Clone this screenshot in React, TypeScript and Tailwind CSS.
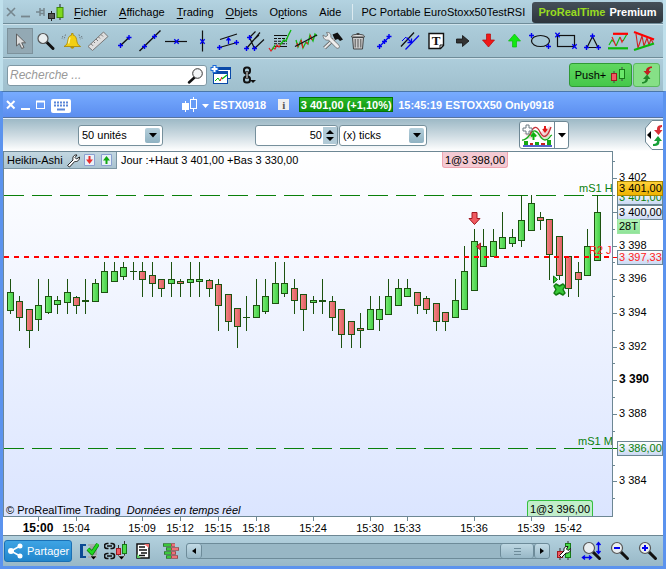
import React from "react";

type Candle = [x: number, high: number, top: number, bottom: number, low: number, dir: "u" | "d" | "n"];

const CANDLES: Candle[] = [
  [10, 279, 292, 311, 314, "u"], [19, 296, 301, 318, 331, "d"], [29, 309, 309, 331, 348, "d"],
  [38, 279, 305, 320, 331, "u"], [48, 279, 296, 313, 314, "u"], [57, 296, 300, 305, 314, "u"],
  [67, 279, 292, 303, 314, "u"], [76, 296, 297, 306, 314, "d"], [85, 279, 300, 302, 314, "n"],
  [95, 279, 283, 302, 302, "u"], [104, 262, 271, 293, 293, "u"], [114, 262, 271, 282, 282, "u"],
  [123, 262, 267, 277, 280, "u"], [133, 262, 271, 272, 280, "n"], [142, 262, 271, 280, 297, "d"],
  [152, 262, 275, 284, 297, "d"], [161, 279, 279, 289, 297, "d"], [171, 262, 279, 284, 297, "u"],
  [180, 279, 281, 284, 297, "d"], [190, 262, 279, 283, 297, "u"], [199, 262, 279, 282, 297, "u"],
  [209, 279, 280, 289, 297, "d"], [218, 279, 284, 306, 331, "d"], [228, 294, 294, 322, 331, "d"],
  [237, 308, 308, 327, 348, "d"], [246, 296, 317, 318, 331, "n"], [256, 279, 305, 318, 318, "u"],
  [265, 279, 296, 312, 314, "u"], [275, 262, 283, 304, 304, "u"], [284, 262, 283, 294, 297, "u"],
  [294, 279, 288, 301, 314, "d"], [303, 294, 294, 310, 331, "d"], [313, 296, 300, 303, 314, "u"],
  [322, 279, 300, 302, 314, "n"], [332, 296, 301, 318, 331, "d"], [341, 309, 309, 335, 348, "d"],
  [351, 321, 321, 335, 348, "d"], [360, 313, 328, 331, 348, "d"], [370, 296, 309, 330, 330, "u"],
  [379, 296, 309, 320, 331, "u"], [388, 279, 296, 315, 315, "u"], [398, 279, 288, 306, 306, "u"],
  [407, 279, 288, 297, 297, "u"], [417, 292, 292, 306, 314, "d"], [426, 296, 298, 310, 314, "d"],
  [436, 303, 303, 322, 331, "d"], [445, 312, 312, 322, 331, "d"], [455, 279, 300, 318, 318, "u"],
  [464, 246, 271, 310, 310, "u"], [474, 229, 241, 291, 291, "u"], [483, 229, 246, 267, 267, "u"],
  [493, 229, 241, 257, 257, "u"], [502, 212, 237, 249, 249, "u"], [512, 229, 237, 244, 247, "u"],
  [521, 195, 220, 241, 247, "u"], [531, 195, 203, 231, 231, "u"], [540, 212, 217, 221, 230, "d"],
  [549, 219, 219, 255, 280, "d"], [559, 236, 236, 276, 280, "d"], [568, 256, 256, 289, 297, "d"],
  [578, 262, 272, 280, 297, "d"], [587, 229, 246, 276, 276, "u"], [597, 195, 212, 261, 261, "u"],
];

const TIMES: { x: number; label: string; strong?: boolean }[] = [
  { x: 38, label: "15:00", strong: true }, { x: 76, label: "15:04" }, { x: 142, label: "15:09" },
  { x: 180, label: "15:12" }, { x: 218, label: "15:15" }, { x: 256, label: "15:18" },
  { x: 313, label: "15:24" }, { x: 370, label: "15:30" }, { x: 407, label: "15:33" },
  { x: 474, label: "15:36" }, { x: 531, label: "15:39" }, { x: 568, label: "15:42" },
];

const PRICES: { y: number; label: string; strong?: boolean }[] = [
  { y: 178, label: "3 402" }, { y: 246, label: "3 398" }, { y: 279, label: "3 396" },
  { y: 313, label: "3 394" }, { y: 347, label: "3 392" }, { y: 380, label: "3 390", strong: true },
  { y: 414, label: "3 388" }, { y: 481, label: "3 384" },
];

const MINOR_TICKS = [161, 195, 229, 262, 296, 330, 363, 397, 431, 465, 498];
const MAJOR_TICKS = [178, 212, 246, 279, 313, 347, 380, 414, 448, 481];

function Plus({ x, y }: { x: number; y: number }) {
  return <path d={`M${x - 2.5} ${y}h5M${x} ${y - 2.5}v5`} stroke="#0000f0" strokeWidth="1.4" fill="none" />;
}

function Cross({ x, y }: { x: number; y: number }) {
  return (
    <path d={`M${x - 2.2} ${y - 2.2}l4.4 4.4M${x + 2.2} ${y - 2.2}l-4.4 4.4`} stroke="#0000f0" strokeWidth="1.3" fill="none" />
  );
}

function Lens({ x, y, r, children }: { x: number; y: number; r: number; children?: React.ReactNode }) {
  return (
    <g>
      <path d={`M${x + r * 0.7} ${y + r * 0.7}L${x + r + 5} ${y + r + 5}`} stroke="#111" strokeWidth="3" strokeLinecap="round" />
      <circle cx={x} cy={y} r={r} fill="#e9eef0" stroke="#555" strokeWidth="1.2" />
      {children}
    </g>
  );
}

const ARROW_DOWN = "M11.5 6h4v6h4L13.5 19 7.5 12h4z";
const ARROW_UP = "M11.5 19h4v-6h4L13.5 6 7.5 13h4z";

const TOOLS: { name: string; art: React.ReactNode }[] = [
  { name: "Sélection", art: <path d="M9.5 6v12l2.8-2.5 2.4 5 2.3-1-2.3-4.7h3.8z" fill="#dcdcdc" stroke="#555" strokeWidth=".9" /> },
  { name: "Zoom", art: <Lens x={10} y={10.5} r={5} /> },
  {
    name: "Alerte",
    art: (
      <g>
        <path d="M5 18.5c3-1.5 3.5-3.5 4-7 .5-2.5 1.500-4 3.500-4.300V5.500h1.600v1.700c2 .3 3 1.800 3.500 4.300.5 3.500 1 5.500 4 7z" fill="#f2cf12" stroke="#a88500" strokeWidth=".8" />
        <path d="M11 9.500c-.8 2-.8 4-1.500 6" stroke="#fff4a0" strokeWidth="1.5" fill="none" />
        <path d="M11.3 19h4c-.5 2.200-3.500 2.200-4 0z" fill="#b89200" />
        <path d="M6.500 6.500l-1.500 5M3.800 8l-.8 3M20 6.500l1.500 5M22.500 8l.8 3" stroke="#6c7980" strokeDasharray="1.5 1" fill="none" />
      </g>
    ),
  },
  {
    name: "Règle",
    art: (
      <g>
        <path d="M3 18.500L18.500 4l4.500 4.500L7.500 22.500z" fill="#dedede" stroke="#777" />
        <path d="M6 15.800l2 2M8.500 13.500l1.500 1.500M11 11l2 2M13.500 9l1.500 1.500M16 6.500l2 2" stroke="#777" />
      </g>
    ),
  },
  { name: "Segment", art: <g><path d="M9.5 17.5l8.500-8" stroke="#111" strokeWidth="1.5" /><Plus x={9.5} y={17.5} /><Plus x={18} y={9.5} /></g> },
  { name: "Droite", art: <g><path d="M2.5 23L23.5 2.5" stroke="#111" strokeWidth="1.4" /><Plus x={7.5} y={18.5} /><Plus x={17.5} y={8.5} /></g> },
  { name: "Horizontale", art: <g><path d="M2 13.5h22" stroke="#111" strokeWidth="1.2" /><Cross x={13.5} y={13.5} /></g> },
  { name: "Verticale", art: <g><path d="M13.5 2.5v21" stroke="#111" strokeWidth="1.2" /><Cross x={13.5} y={13.5} /></g> },
  {
    name: "Canal",
    art: (
      <g>
        <path d="M5 11.500l17-5.500M4.500 19.500l17.500-5" stroke="#111" strokeWidth="1.2" />
        <path d="M13.500 16V10.500M11.500 12.500l2-2.500 2 2.500" stroke="#0000f0" strokeWidth="1.3" fill="none" />
        <Plus x={4.5} y={19.5} /><Plus x={21.5} y={14.5} />
      </g>
    ),
  },
  {
    name: "Fourche",
    art: (
      <g>
        <path d="M8.500 9.500l6-6M5.500 20.500L19 4.500M13.500 20.500l9.500-9M8.500 9.500l5 11M10.500 14L18 7" stroke="#111" strokeWidth="1.2" />
        <Plus x={8.5} y={9.5} /><Plus x={5.5} y={20.5} /><Plus x={13.5} y={20.5} />
      </g>
    ),
  },
  {
    name: "Fibonacci",
    art: (
      <g>
        <path d="M7 7.500h13M7 18.500h13" stroke="#111" strokeWidth="1.2" />
        <path d="M7 10.500h13M7 13.200h13M7 15.800h13" stroke="#111" strokeWidth="1.1" strokeDasharray="3 1" />
        <path d="M2 20l2 3 2-3 2 1 2-4 2 2 2-3" stroke="#e02020" strokeWidth="1.2" fill="none" />
        <path d="M5 22l3-5M13 17l4-5 2 1 2-5 3-6" stroke="#12b812" strokeWidth="1.4" fill="none" />
      </g>
    ),
  },
  {
    name: "Régression",
    art: (
      <g>
        <path d="M3 12l2 7 3-7 2 8 3-6 2 2 2-9 3 6 2-7 2 2" stroke="#12b812" strokeWidth="1.3" fill="none" />
        <path d="M4 15l1 4M8 12l2 8M13 14l2 2M17 7l2 5" stroke="#e02020" strokeWidth="1.3" fill="none" />
        <path d="M2 18.500L24 7" stroke="#111" strokeWidth="1.3" />
      </g>
    ),
  },
  {
    name: "Outils",
    art: (
      <g>
        <path d="M13.500 6.500l5-2 5.500 7-3 1.500-2-2-3 1z" fill="#111" />
        <path d="M15 11l-9.500 9" stroke="#555" strokeWidth="3.6" />
        <path d="M15 11l-9.500 9" stroke="#e8e8e8" strokeWidth="2" />
        <path d="M4 7l2.800 1.800L9 7 7.500 4.500c3-.5 5 1.500 4.300 4.800l8.200 8c1.500 2-1 4-2.800 2.500L9.500 12c-3 .8-5.500-1.500-5.500-5z" fill="#eee" stroke="#666" strokeWidth=".8" />
      </g>
    ),
  },
  {
    name: "Supprimer",
    art: (
      <g>
        <path d="M7.500 9.500h11l-1 11.500h-9z" fill="#ccc" stroke="#444" />
        <path d="M10.200 11v8.500M13 11v8.500M15.800 11v8.500" stroke="#555" />
        <path d="M6.500 9c0-2 2-2.500 6.500-2.500s6.500.5 6.500 2.500z" fill="#e2e2e2" stroke="#444" />
        <path d="M11 6.500c0-1.500 4-1.500 4 0" stroke="#444" fill="none" />
      </g>
    ),
  },
  { name: "Segment bleu", art: <g><path d="M8.500 18.500l10-10" stroke="#0000f0" strokeWidth="1.2" /><Plus x={8.5} y={18.5} /><Plus x={18} y={8.5} /><Plus x={13.5} y={13.5} /></g> },
  {
    name: "Parallèle",
    art: (
      <g>
        <path d="M4 18.500l13-14" stroke="#111" strokeWidth="1.3" />
        <path d="M8.500 21.500L22 7.500" stroke="#0000f0" strokeWidth="1.2" />
        <path d="M9.500 9.500l4.500 4.500M14.500 10.500v4h-4" stroke="#0000f0" strokeWidth="1.3" fill="none" />
        <path d="M5 13l4-4" stroke="#0000f0" />
      </g>
    ),
  },
  {
    name: "Texte",
    art: (
      <g>
        <path d="M6 5.500h14.500v12l-3 3H6z" fill="#fff" stroke="#111" strokeWidth="1.4" />
        <path d="M20.500 17h-3.500v3.500" fill="none" stroke="#111" />
        <text x="13" y="17" textAnchor="middle" fontFamily="Liberation Serif, serif" fontWeight="bold" fontSize="13" fill="#111">T</text>
      </g>
    ),
  },
  { name: "Flèche", art: <path d="M7.500 11h6V7.500L20 13l-6.500 5.500V15h-6z" fill="#333" stroke="#111" strokeWidth=".8" /> },
  { name: "Flèche baissière", art: <path d={ARROW_DOWN} fill="#f01818" stroke="#b80808" strokeWidth=".7" /> },
  { name: "Flèche haussière", art: <path d={ARROW_UP} fill="#12e812" stroke="#10b810" strokeWidth=".7" /> },
  { name: "Ellipse", art: <g><ellipse cx="13.5" cy="13" rx="9" ry="5.5" fill="none" stroke="#111" strokeWidth="1.2" /><Plus x={4.5} y={7.5} /><Plus x={21.5} y={18.5} /></g> },
  { name: "Rectangle", art: <g><rect x="4.5" y="7.5" width="17" height="11" fill="none" stroke="#111" strokeWidth="1.2" /><Cross x={4.5} y={7} /><Cross x={21.5} y={18.5} /></g> },
  { name: "Triangle", art: <g><path d="M13.500 8.500L8 19.500h11z" fill="none" stroke="#111" strokeWidth="1.2" /><Plus x={13.5} y={8} /><Plus x={7.5} y={19.5} /><Plus x={19.5} y={19.5} /></g> },
  {
    name: "Canal de prix",
    art: (
      <g>
        <path d="M4 17l3-5 2 2M11 18l4-9M18 13l4-7" stroke="#12b812" strokeWidth="1.2" fill="none" />
        <path d="M7 9l4 9M15 9l2 5 1-2" stroke="#e02020" strokeWidth="1.2" fill="none" />
        <path d="M8 5.800h15" stroke="#f00" strokeWidth="2.2" />
        <path d="M3 20.300h20" stroke="#0cb80c" strokeWidth="2.2" />
      </g>
    ),
  },
  {
    name: "Triangle de prix",
    art: (
      <g>
        <path d="M5 6l2 14 4-12 2 10 3-8 2 7 2-6 2 4" stroke="#d02020" strokeWidth="1.1" fill="none" />
        <path d="M3 4l20 7.500" stroke="#f00" strokeWidth="2.2" />
        <path d="M3 22l20-6.500" stroke="#0cb80c" strokeWidth="2.2" />
      </g>
    ),
  },
];

const MENUS: [string, string, string][] = [
  ["", "F", "ichier"], ["", "A", "ffichage"], ["", "T", "rading"], ["", "O", "bjets"], ["O", "p", "tions"], ["Aide", "", ""],
];

function AppMenu() {
  return (
    <header className="flex h-6 items-center border-b border-[#6f8c99] bg-linear-to-b from-[#b3d3e1] to-[#a4c3d1]">
      <svg width="62" height="22" className="shrink-0" aria-hidden="true">
        <path d="M4 7l8 8M12 7l-8 8" stroke="#76868e" strokeWidth="1.6" />
        <path d="M18 15.500h9" stroke="#76868e" strokeWidth="1.8" />
        <path d="M33 11h4M37 7v8M37 9.500h4.500M37 12.500h4.500M41 7v8" stroke="#76868e" strokeWidth="1.5" />
        <path d="M48.500 10v10M57 3v16" stroke="#222" />
        <rect x="45.5" y="12.5" width="6" height="5" fill="#555" stroke="#222" />
        <rect x="54" y="6.500" width="6" height="10" fill="#7fd81e" stroke="#3f8a08" />
      </svg>
      <nav className="ml-[9px] flex gap-3">
        {MENUS.map(([before, key, after]) => (
          <button key={before + key + after} type="button" className="whitespace-nowrap">
            {before}<span className="underline underline-offset-2">{key}</span>{after}
          </button>
        ))}
      </nav>
      <div className="ml-[11px] h-4 border-l border-[#dceaf0] pl-2 leading-4 whitespace-nowrap">PC Portable EuroStoxx50TestRSI</div>
      <div className="mt-px ml-auto flex h-[21px] w-[131px] shrink-0 items-center justify-center gap-1 rounded-[3px] bg-linear-to-b from-[#454f58] to-[#2c353d] font-bold">
        <span className="text-[#98dc20]">ProRealTime</span>
        <span className="text-white">Premium</span>
      </div>
    </header>
  );
}

function DrawingTools() {
  return (
    <div className="flex h-[34px] items-center border-t border-b border-t-[#cfe3ec] border-b-[#6f8c99] bg-linear-to-b from-[#adcddb] to-[#9fbfcd] pl-1">
      {TOOLS.map((tool, i) => (
        <button
          key={tool.name}
          type="button"
          aria-label={tool.name}
          className={i === 0 ? "size-[26px] shrink-0 border border-[#7d929c] bg-[#93a9b4]" : "size-[26px] shrink-0"}
        >
          <svg viewBox="0 0 26 26" className={i === 0 ? "-m-px size-[26px]" : "size-[26px]"} fill="none">{tool.art}</svg>
        </button>
      ))}
    </div>
  );
}

function SwapArrows() {
  return (
    <svg width="18" height="20" viewBox="0 0 18 20" aria-hidden="true">
      <path d="M14 1.500C9 1.500 8 4 8 6H5.500l4 4.500L13 6h-2c0-1.500.5-3 3-3z" fill="#c02020" />
      <path d="M4 18.500c5 0 6-2.500 6-4.500h2.500L9 9.500 5 14h2.500c0 1.500-.5 3-3.500 3z" fill="#20882a" />
    </svg>
  );
}

function SearchRow() {
  return (
    <div className="flex h-[33px] items-center border-t border-[#cfe3ec] bg-linear-to-b from-[#adcddb] to-[#9fbfcd] pl-1">
      <label className="flex h-[21px] w-[200px] items-center rounded-[3px] border border-[#7f98a4] bg-white">
        <input aria-label="Recherche" placeholder="Recherche ..." className="min-w-0 flex-1 pl-[2px] text-xs italic outline-none placeholder:text-[#999]" />
        <svg width="20" height="19" aria-hidden="true">
          <path d="M9 11l-6 5.500" stroke="#111" strokeWidth="2.5" strokeLinecap="round" />
          <circle cx="11.5" cy="7.5" r="4.8" fill="#f4f6f7" stroke="#333" />
        </svg>
      </label>
      <button type="button" aria-label="Nouveau graphique" className="ml-[3px]">
        <svg width="22" height="20">
          <rect x="6.500" y="2.500" width="14" height="11" fill="#fff" stroke="#0a49a8" /><path d="M6 3.500h15" stroke="#0a49a8" strokeWidth="3" />
          <rect x="3.500" y="6.500" width="14" height="12" fill="#fff" stroke="#0a49a8" /><path d="M3 7.500h15" stroke="#0a49a8" strokeWidth="3" />
          <path d="M5 16l3-3 2 3" stroke="#0b0" fill="none" /><path d="M10 16l2-4" stroke="#d00" /><path d="M12 14l5-4" stroke="#0b0" strokeWidth="1.3" />
          <path d="M.5 4h8M4.500 0v8" stroke="#1a6ad8" strokeWidth="4" /><path d="M1.500 4h6M4.500 1v6" stroke="#fff" strokeWidth="2" />
        </svg>
      </button>
      <button type="button" aria-label="Lier les fenêtres" className="ml-[9px]">
        <svg width="18" height="20" fill="none">
          <rect x="3" y="2.500" width="6" height="6" rx="2.500" stroke="#111" strokeWidth="2" />
          <rect x="3" y="11.500" width="6" height="6" rx="2.500" stroke="#111" strokeWidth="2" />
          <path d="M6 6v8" stroke="#111" strokeWidth="3" /><path d="M6 6.500v7" stroke="#fff" />
          <path d="M9 15h6l-3 3z" fill="#111" />
        </svg>
      </button>
      <button type="button" className="mr-px ml-auto flex h-6 w-[63px] items-center justify-center gap-1 rounded-[3px] border border-[#2f9a35] bg-linear-to-b from-[#5fd75f] to-[#45c84a]">
        Push+
        <svg width="16" height="18" aria-hidden="true">
          <path d="M4 5v12M12 1v14" stroke="#444" />
          <rect x="1.500" y="7.500" width="5" height="7" fill="#f05a62" stroke="#a01a22" />
          <rect x="9.500" y="3.500" width="5" height="9" fill="#6ae86a" stroke="#177a17" />
        </svg>
      </button>
      <button type="button" aria-label="Inverser" className="mr-[3px] flex h-6 w-[27px] items-center justify-center rounded-[3px] border border-[#5bb85f] bg-[#86e086]">
        <SwapArrows />
      </button>
    </div>
  );
}

function TitleBar() {
  return (
    <div className="flex h-[26px] items-center border-b border-[#5674a0] bg-linear-to-b from-[#78acff] to-[#5b8def] font-bold text-white">
      <svg width="70" height="24" fill="none" className="shrink-0" aria-hidden="true">
        <path d="M4 8l7.500 7.500M11.500 8L4 15.500" stroke="#fff" strokeWidth="2" />
        <path d="M18 16h9" stroke="#fff" strokeWidth="2" />
        <rect x="33.500" y="8.500" width="8" height="7" stroke="#fff" /><path d="M33 8.500h9" stroke="#fff" strokeWidth="2" />
        <rect x="48" y="6" width="20" height="14" rx="2" fill="#fff" />
        <path d="M51 9.500h14M51 12.500h14" stroke="#5b86d8" strokeWidth="2" strokeDasharray="2 1" /><path d="M54 16.500h8" stroke="#5b86d8" strokeWidth="2" />
      </svg>
      <svg width="30" height="22" fill="none" className="ml-[108px] shrink-0" aria-hidden="true">
        <path d="M4.500 7v11M12.500 3v15" stroke="#fff" />
        <rect x="1" y="9" width="7" height="7" fill="#fff" />
        <rect x="9.500" y="5.500" width="6" height="9" fill="#689cf6" stroke="#fff" />
        <path d="M21 10h7l-3.500 4z" fill="#fff" />
      </svg>
      <span className="ml-[2px]">ESTX0918</span>
      <span className="ml-3 flex size-[11px] items-center justify-center bg-[#eee] font-['Liberation_Serif',serif] text-[11px] text-[#555]">i</span>
      <span className="ml-[10px] flex h-[15px] w-[94px] items-center justify-center border border-[#067306] bg-linear-to-b from-[#28b828] to-[#0c930c] whitespace-nowrap">
        3 401,00 (+1,10%)
      </span>
      <span className="ml-[5px] whitespace-nowrap">15:45:19 ESTOXX50 Only0918</span>
    </div>
  );
}

function Dropdown({ label, value, className }: { label: string; value: string; className: string }) {
  return (
    <label className={`relative flex h-[21px] shrink-0 items-center rounded-[3px] border border-[#76909c] bg-white ${className}`}>
      <select aria-label={label} className="size-full appearance-none bg-transparent pl-[3px] outline-none">
        <option>{value}</option>
      </select>
      <span className="pointer-events-none absolute top-[2px] right-[2px] flex size-[15px] items-center justify-center rounded-[2px] bg-linear-to-b from-[#b5cfdb] to-[#8fb2c2]">
        <svg width="8" height="5" aria-hidden="true"><path d="M0 0h8L4 4.500z" fill="#000" /></svg>
      </span>
    </label>
  );
}

function ChartToolbar() {
  return (
    <div className="flex h-[33px] items-center border-t border-[#e4eefa] bg-linear-to-b from-[#9db9c6] via-[#ccdae1] to-white">
      <Dropdown label="Nombre d'unités" value="50 unités" className="ml-[75px] w-[85px]" />
      <div className="ml-[92px] flex h-[21px] w-[83px] shrink-0 items-center rounded-[3px] border border-[#76909c] bg-white">
        <input aria-label="Nombre de ticks" defaultValue="50" className="min-w-0 flex-1 text-right outline-none" />
        <span className="ml-px flex h-[17px] w-[14px] flex-col items-center justify-between bg-[#b1cad6] py-[3px]">
          <svg width="8" height="4" aria-hidden="true"><path d="M0 4h8L4 0z" /></svg>
          <svg width="8" height="4" aria-hidden="true"><path d="M0 0h8L4 4z" /></svg>
        </span>
      </div>
      <Dropdown label="Type d'unité" value="(x) ticks" className="ml-px w-[88px]" />
      <button type="button" aria-label="Ajouter un indicateur" className="ml-[92px] flex h-[28px] w-[50px] shrink-0 items-center rounded-[3px] border border-[#6d8794] bg-white">
        <svg width="34" height="26" fill="none">
          <path d="M3 18l10-9 8 8 9-12v8c-4 8-8 2-11 1" fill="#c8f0c8" /><path d="M3 11l8 6 10-7 9-6v9l-7 4-5-4" fill="#f5c8cc" opacity=".7" />
          <path d="M2 18c7 1 8-10 13-9s5 9 10 9 4-4 7-5" stroke="#1aa81a" strokeWidth="1.3" />
          <path d="M10 13c3-10 7-9 10-3s7 7 11-5" stroke="#c83038" strokeWidth="1.3" />
          <path d="M3 24h29" stroke="#1a30b8" strokeWidth="1.5" />
          <path d="M4 23v-4h4v4zM15 23v-3h4v3zM27 23v-5h4v5z" fill="#12a812" /><path d="M10 23v-2h3v2zM21 23v-2h4v2z" fill="#c82020" />
          <path d="M13.500 18v-6M11 14.500l2.500-3 2.500 3" stroke="#0cb00c" strokeWidth="2" /><path d="M25 4v5M23 7l2 2.500L27 7" stroke="#e01818" strokeWidth="2" />
          <path d="M6 3h3v3h3v3H9v3H6V9H3V6h3z" fill="#fff" stroke="#6d7b82" />
        </svg>
        <span className="flex h-full flex-1 items-center justify-center border-l border-[#6d8794]">
          <svg width="8" height="5" aria-hidden="true"><path d="M0 0h8L4 4.500z" fill="#000" /></svg>
        </span>
      </button>
      <button type="button" aria-label="Ouvrir le carnet" className="ml-auto shrink-0">
        <svg width="19" height="32" fill="none">
          <path d="M19 1.500H8L1.500 9v14L8 30.500h11" fill="#fff" stroke="#6d8794" />
          <path d="M7 12v8l-4-4z" fill="#000" />
          <path d="M18 6c-5 0-5 3-5 5h-3l4.500 5 4-5h-2.500c0-2 .5-3 2-3z" fill="#d83038" /><path d="M9 27c6 0 6.500-2 6.500-5h2.500l-4-5-4 5h3c0 2-1 3-4 3z" fill="#18a038" />
        </svg>
      </button>
    </div>
  );
}

function PlotArea() {
  return (
    <div className="relative h-[366px] min-w-0 flex-1 border-t border-b border-l border-[#6d8794] bg-linear-to-b from-white to-[#dbe5ff]">
      <svg className="absolute inset-0 size-full" role="img" aria-label="Graphique Heikin-Ashi ESTX0918">
        <defs>
          <linearGradient id="up"><stop offset="0" stopColor="#78ea72" /><stop offset="1" stopColor="#42cf46" /></linearGradient>
          <linearGradient id="down"><stop offset="0" stopColor="#f58484" /><stop offset="1" stopColor="#dd5d60" /></linearGradient>
        </defs>
        <g transform="translate(-4 -152)" shapeRendering="crispEdges">
          <path d="M4 195.500H700M4 448.500H700" stroke="#0a800a" strokeDasharray="20 8" />
          {CANDLES.map(([x, high, top, bottom, low, dir]) => (
            <g key={x}>
              <rect x={x} y={high} width="1" height={low - high} fill="#1c5210" />
              {dir === "n" ? (
                <rect x={x - 3} y={top} width="7" height={bottom - top} fill="#1c5210" />
              ) : (
                <rect x={x - 2.5} y={top + 0.5} width="6" height={bottom - top - 1} fill={dir === "u" ? "url(#up)" : "url(#down)"} stroke="#1c5210" />
              )}
            </g>
          ))}
          <path d="M4 257H700" stroke="#f00" strokeWidth="2" strokeDasharray="5 5" />
        </g>
        <g transform="translate(-4 -152)">
          <path d="M472 212.500h5v6h3l-5.500 6-5.500-6h3z" fill="#f05a60" stroke="#a01820" />
          <path d="M480.500 243v7l-4-3.500z" fill="#e83a40" stroke="#a01820" />
          <path d="M553.500 276v7l4-3.500z" fill="#38d038" stroke="#107010" />
          <path d="M556 284l3.500 2 3.500-2 2 2-2 3.500 2 3.500-2 2-3.500-2-3.500 2-2-2 2-3.500-2-3.500z" fill="#38c838" stroke="#127a12" strokeWidth="1.5" strokeLinejoin="round" />
          <text x="579" y="192" fontSize="11" fill="#0a800a">mS1 H</text>
          <text x="578" y="445" fontSize="11" fill="#0a800a">mS1 M</text>
          <text x="589" y="254" fontSize="11" fill="#f22">R2 J</text>
        </g>
      </svg>
      <div className="absolute top-0 left-0 flex h-[17px] w-[113px] items-center border-r border-b border-[#7d96a3] bg-linear-to-b from-[#c3d7e1] to-[#a9c3d0] pl-[3px]">
        Heikin-Ashi
        <svg width="50" height="16" fill="none" className="ml-[3px]" aria-hidden="true">
          <path d="M1.500 13.500L7 8c-.8-3 1-5.500 4-5L9 5.500 10.500 7 13.500 5c.3 3-2 5-4.800 4.500L3.500 15z" fill="#fff" stroke="#222" />
          <path d="M18.500 2.500h10v11h-10zM35.500 2.500h10v11h-10z" fill="#e9f1f8" stroke="#8ba0d0" />
          <path d="M22.500 4h2v3.500H27L23.500 12 20 7.500h2.500z" fill="#e83030" />
          <path d="M39.500 12h2V8.500H44L40.500 4 37 8.500h2.500z" fill="#12a812" />
        </svg>
      </div>
      <div className="absolute top-px left-[117px] whitespace-nowrap">Jour :+Haut 3 401,00 +Bas 3 330,00</div>
      <div className="absolute top-0 left-[438px] flex h-4 w-[66px] items-center justify-center rounded-b-[3px] border border-t-0 border-[#f0a4b0] bg-[#f4cad3]">1@3 398,00</div>
      <div className="absolute bottom-0 left-[523px] flex h-4 w-[66px] items-center justify-center rounded-t-[3px] border border-b-0 border-[#35c040] bg-[#c2eecb]">1@3 396,00</div>
      <div className="absolute -bottom-px left-[2px] whitespace-nowrap">© ProRealTime Trading &nbsp;<i>Données en temps réel</i></div>
    </div>
  );
}

function PriceBox({ y, label, fill, color, stroke = "#6d8794", width = 45 }: { y: number; label: string; fill: string; color: string; stroke?: string; width?: number }) {
  return (
    <g>
      <rect x="4.5" y={y - 6.5} width={width} height="14" fill={fill} stroke={stroke} />
      <text x="6" y={y + 4} fontSize="11" fill={color}>{label}</text>
    </g>
  );
}

function PriceAxis() {
  return (
    <svg width="51" height="366" className="shrink-0 border-l border-[#6d8794] bg-white" role="img" aria-label="Échelle des prix">
      <defs>
        <linearGradient id="box" x2="0" y2="1"><stop offset="0" stopColor="#fff" /><stop offset="1" stopColor="#c9d8f3" /></linearGradient>
        <linearGradient id="gold" x2="0" y2="1"><stop offset="0" stopColor="#ffd23c" /><stop offset="1" stopColor="#eeb200" /></linearGradient>
        <linearGradient id="mint" x2="0" y2="1"><stop offset="0" stopColor="#b4f2b8" /><stop offset="1" stopColor="#8fe398" /></linearGradient>
      </defs>
      <g transform="translate(0 -151)">
        {MINOR_TICKS.map((y) => <path key={y} d={`M0 ${y + 0.5}h2`} stroke="#6d8794" />)}
        {MAJOR_TICKS.map((y) => <path key={y} d={`M0 ${y + 0.5}h4`} stroke="#6d8794" />)}
        {PRICES.map((p) => (
          <text key={p.label} x="6" y={p.y + 3} fontSize={p.strong ? 12 : 11} fontWeight={p.strong ? "bold" : "normal"}>{p.label}</text>
        ))}
        <path d="M0 257.500h4" stroke="#f00" /><path d="M0 448.500h4" stroke="#0a800a" />
        <PriceBox y={197} label="3 401,00" fill="url(#box)" color="#0a800a" />
        <PriceBox y={188} label="3 401,00" fill="url(#gold)" color="#000" stroke="#a88400" />
        <PriceBox y={212} label="3 400,00" fill="url(#box)" color="#000" />
        <PriceBox y={226} label="28T" fill="url(#mint)" color="#000" stroke="#9ce6a2" width={22} />
        <PriceBox y={257} label="3 397,33" fill="url(#box)" color="#f22" />
        <PriceBox y={448} label="3 386,00" fill="url(#box)" color="#0a800a" />
      </g>
    </svg>
  );
}

function TimeAxis() {
  return (
    <svg className="block h-[18px] w-full bg-white" role="img" aria-label="Échelle de temps">
      <g transform="translate(-3 -517)">
        {TIMES.map((t) => (
          <g key={t.label}>
            <path d={`M${t.x + 0.5} 517v4`} stroke="#6d8794" />
            <text x={t.x} y="532" textAnchor="middle" fontSize={t.strong ? 12 : 11} fontWeight={t.strong ? "bold" : "normal"}>{t.label}</text>
          </g>
        ))}
      </g>
    </svg>
  );
}

function BottomBar() {
  return (
    <footer className="flex h-[31px] items-center border-t border-[#6d8794] bg-linear-to-b from-[#b3d1de] to-[#98b8c7]">
      <button type="button" className="ml-px flex h-[22px] w-[68px] shrink-0 items-center rounded-[3px] border border-[#1a70b4] bg-linear-to-b from-[#3ea4e4] to-[#2086cc] pl-[3px] text-white">
        <svg width="15" height="16" fill="none" className="mr-1" aria-hidden="true">
          <path d="M12 3L3 8l9 5" stroke="#fff" strokeWidth="1.5" />
          <circle cx="12" cy="3" r="2.5" fill="#fff" /><circle cx="3" cy="8" r="3" fill="#fff" /><circle cx="12" cy="13" r="2.5" fill="#fff" />
        </svg>
        Partager
      </button>
      <button type="button" aria-label="Ordres" className="ml-[6px] shrink-0">
        <svg width="21" height="22" fill="none">
          <path d="M8 4H2v14h6v-2H5V6h3z" fill="#0b4a94" /><path d="M10 4h9v14h-9v-2h2V6h-2z" fill="#a8adb0" /><path d="M12 6h7v12h-7z" fill="#9fa4a7" />
          <path d="M10 9l4 4 6-9" stroke="#0a7a0a" strokeWidth="4" /><path d="M10 9l4 4 6-9" stroke="#20d820" strokeWidth="2.6" />
          <path d="M12 16h7l-3.500 4z" fill="#000" stroke="#fff" strokeWidth=".5" />
        </svg>
      </button>
      <button type="button" aria-label="Lier" className="ml-[5px] shrink-0">
        <svg width="24" height="22" fill="none">
          <path d="M4.500 3.500H3a2 2 0 000 5h1.500M6.500 3.500H8a2 2 0 010 5H6.500M4.500 13.500H3a2 2 0 000 5h1.500M6.500 13.500H8a2 2 0 010 5H6.500M3 6h5M3 16h5" stroke="#111" strokeWidth="1.6" />
          <path d="M14.500 5v12M20.500 1v15" stroke="#333" />
          <rect x="12.500" y="8.500" width="4" height="6" fill="#f05a62" stroke="#a01a22" /><rect x="18.500" y="4.500" width="4" height="9" fill="#4ada4a" stroke="#177a17" />
          <path d="M14 16h7l-3.500 4z" fill="#000" stroke="#fff" strokeWidth=".5" />
        </svg>
      </button>
      <button type="button" aria-label="Liste" className="ml-[7px] shrink-0">
        <svg width="16" height="18" fill="none">
          <rect x="2" y="2" width="12" height="14" fill="#fff" stroke="#111" strokeWidth="1.5" />
          <path d="M4 5h6M4 8h8M6 11h6M4 13.500h6" stroke="#111" strokeWidth="1.3" /><path d="M9 2h5v4z" fill="#f07070" /><path d="M2 12l4 4H2z" fill="#5ac85a" />
        </svg>
      </button>
      <button type="button" aria-label="Profondeur" className="ml-[11px] shrink-0">
        <svg width="18" height="18" fill="none">
          <path d="M1 3h8M4 7h5M2 11h7M4 15h5" stroke="#2f7a2f" strokeWidth="3.6" /><path d="M9 3h4M9 7h8M9 11h5M9 15h7" stroke="#9a4a4a" strokeWidth="3.6" />
          <path d="M2 3h7M5 7h4M3 11h6M5 15h4" stroke="#3ac83a" strokeWidth="2" /><path d="M10 3h3M10 7h6M10 11h3M10 15h5" stroke="#f07078" strokeWidth="2" />
        </svg>
      </button>
      <div className="ml-[6px] flex h-4 min-w-0 flex-1 rounded-[3px] border border-[#6d8b99] bg-[#98b7c5]">
        <button type="button" aria-label="Reculer" className="flex w-[15px] items-center justify-center rounded-[3px] border-r border-[#6d8b99] bg-linear-to-b from-[#c2dbe6] to-[#98b8c7]">
          <svg width="4" height="6"><path d="M4 0v6L0 3z" /></svg>
        </button>
        <div className="ml-auto flex w-[34px] items-center justify-center rounded-[3px] border-x border-[#6d8b99] bg-linear-to-b from-[#bdd7e2] to-[#98b8c7]">
          <svg width="7" height="7" aria-hidden="true"><path d="M0 .5h7M0 3.500h7M0 6.500h7" stroke="#6d8b99" /></svg>
        </div>
        <button type="button" aria-label="Avancer" className="flex w-[15px] items-center justify-center rounded-[3px] border-l border-[#6d8b99] bg-linear-to-b from-[#c2dbe6] to-[#98b8c7]">
          <svg width="4" height="6"><path d="M0 0v6l4-3z" /></svg>
        </button>
      </div>
      <button type="button" aria-label="Réglages" className="ml-[6px] shrink-0">
        <svg width="18" height="22" fill="none">
          <path d="M4 8v12M12 1v19" stroke="#333" /><rect x="1.500" y="11.500" width="5" height="6" fill="#f05a62" stroke="#a01a22" /><rect x="9.500" y="3.500" width="5" height="14" fill="#4ada4a" stroke="#177a17" />
          <path d="M3.500 15.500L8 11c-.5-3 1-5 4-4.500L10.500 9l1.500 1.500L14.500 8.500c.5 3-2 5-4.500 4.500L5.500 17.500z" fill="#fff" stroke="#111" />
        </svg>
      </button>
      <button type="button" aria-label="Zoom automatique" className="ml-[7px] shrink-0">
        <svg width="22" height="22">
          <Lens x={8} y={8} r={5.5} />
          <path d="M17.500 3v10M15.500 5l2-2.500 2 2.500M15.500 11l2 2.500 2-2.500M2 17.500h8M4 15.500l-2.500 2 2.500 2M8 15.500l2.500 2-2.500 2" stroke="#0000f0" strokeWidth="1.4" fill="none" />
        </svg>
      </button>
      <button type="button" aria-label="Zoom arrière" className="ml-[6px] shrink-0">
        <svg width="22" height="22"><Lens x={8} y={8} r={5.5}><path d="M5 8h6" stroke="#0000f0" strokeWidth="2" /></Lens></svg>
      </button>
      <button type="button" aria-label="Zoom avant" className="mr-1 ml-[6px] shrink-0">
        <svg width="22" height="22"><Lens x={8} y={8} r={5.5}><path d="M5 8h6M8 5v6" stroke="#0000f0" strokeWidth="2" /></Lens></svg>
      </button>
    </footer>
  );
}

export default function App() {
  return (
    <div className="w-full min-w-[666px] bg-[#9fbfcd] font-['Liberation_Sans',Arial,sans-serif] text-[11px] leading-[14px] text-black">
      <section className="border-x-[3px] border-[#bfe0ec]">
        <AppMenu />
        <DrawingTools />
        <SearchRow />
      </section>
      <main className="border-x-[3px] border-t border-b-[3px] border-[#5b93ee] border-t-[#4a77a8]">
        <TitleBar />
        <ChartToolbar />
        <div className="flex bg-white">
          <PlotArea />
          <PriceAxis />
        </div>
        <TimeAxis />
        <BottomBar />
      </main>
    </div>
  );
}
